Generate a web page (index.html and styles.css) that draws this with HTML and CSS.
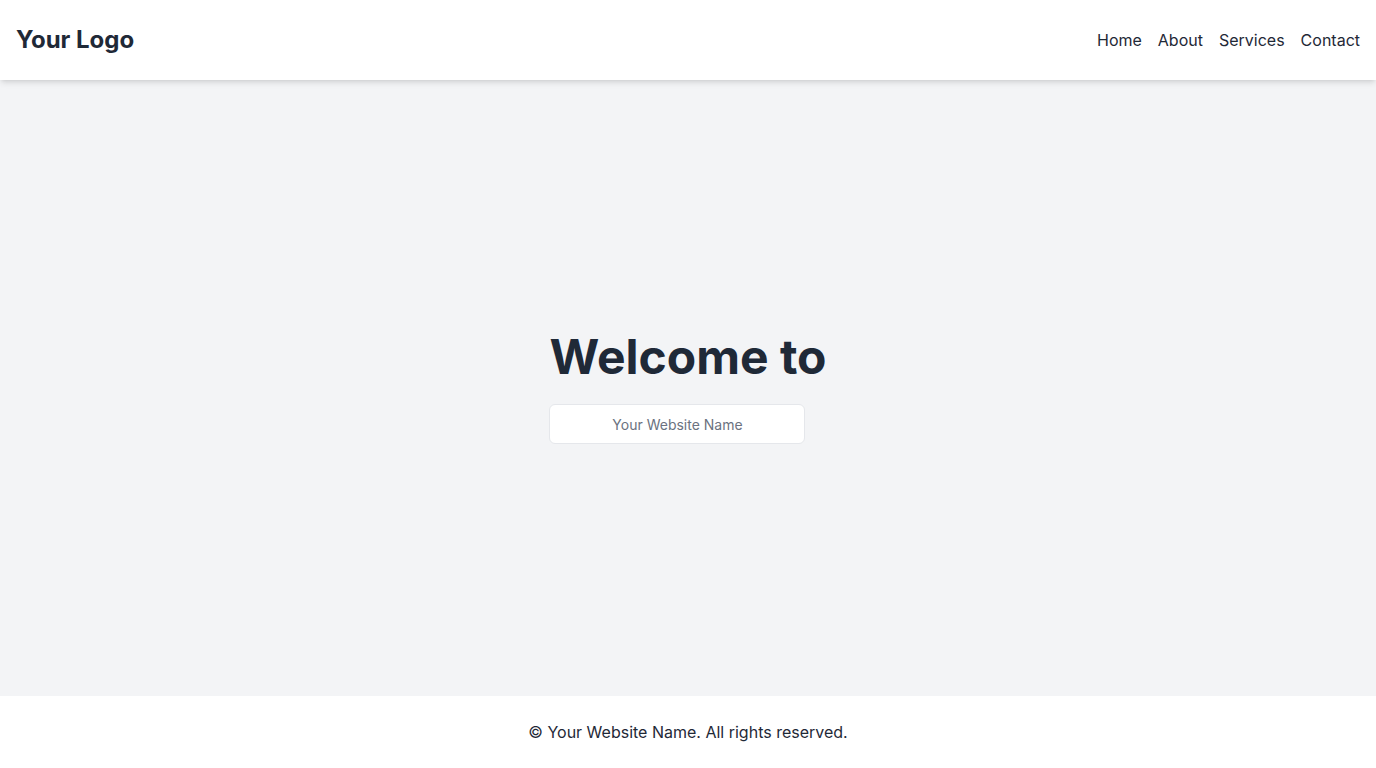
FILE: index.html
```html
<!DOCTYPE html>
<html lang="en">
<head>
<meta charset="utf-8">
<title>Your Website Name</title>
<link rel="stylesheet" href="styles.css">
</head>
<body>
<div class="page">
  <header class="header">
    <div class="logo">Your Logo</div>
    <nav class="nav">
      <a href="#">Home</a>
      <a href="#">About</a>
      <a href="#">Services</a>
      <a href="#">Contact</a>
    </nav>
  </header>
  <main class="main">
    <div class="hero">
      <h1 class="title">Welcome to</h1>
      <input class="name-input" type="text" placeholder="Your Website Name">
    </div>
  </main>
  <footer class="footer">
    <p>&copy; Your Website Name. All rights reserved.</p>
  </footer>
</div>
</body>
</html>
```
FILE: styles.css
```css
* { box-sizing: border-box; }
html, body { margin: 0; padding: 0; }
body {
  font-family: Inter, "Noto Sans", sans-serif;
  color: #1f2937;
  background: #f3f4f6;
}
.page {
  min-height: 768px;
  display: flex;
  flex-direction: column;
}
.header {
  height: 80px;
  background: #fff;
  display: flex;
  align-items: center;
  justify-content: space-between;
  padding: 0 16px;
  box-shadow: 0 4px 6px -1px rgba(0,0,0,0.1), 0 2px 4px -2px rgba(0,0,0,0.1);
  position: relative;
  z-index: 1;
}
.logo {
  font-size: 24px;
  font-weight: 700;
  line-height: 32px;
}
.nav {
  display: flex;
  gap: 16px;
}
.nav a {
  color: #1f2937;
  text-decoration: none;
  font-size: 16px;
  line-height: 24px;
}
.main {
  flex: 1;
  background: #f3f4f6;
  display: flex;
  align-items: center;
  justify-content: center;
}
.hero {
  display: flex;
  flex-direction: column;
  align-items: flex-start;
  padding-top: 1px;
}
.title {
  margin: 0 0 23px;
  font-size: 48px;
  line-height: 48px;
  font-weight: 700;
  color: #1f2937;
}
.name-input {
  width: 256px;
  height: 40px;
  border: 1px solid #e5e7eb;
  border-radius: 6px;
  background: #fff;
  font-family: Inter, "Noto Sans", sans-serif;
  font-size: 14px;
  text-align: center;
  color: #1f2937;
  outline: none;
}
.name-input::placeholder { color: #6b7280; }
.footer {
  height: 72px;
  background: #fff;
  display: flex;
  align-items: center;
  justify-content: center;
}
.footer p {
  margin: 0;
  font-size: 16px;
  line-height: 24px;
}
```
